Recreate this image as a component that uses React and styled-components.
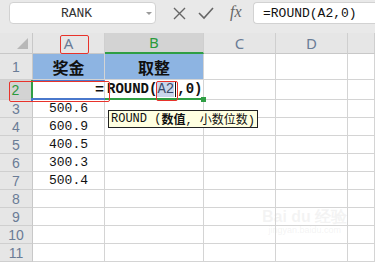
import styled, { createGlobalStyle } from 'styled-components';

const GlobalStyle = createGlobalStyle`
  body {
    margin: 0;
    background: #ffffff;
    font-family: 'Noto Sans', 'Noto Sans CJK SC', sans-serif;
  }
`;

const Page = styled.div`
  position: relative;
  width: 375px;
  height: 264px;
  overflow: hidden;
  background: #ffffff;
`;

const Toolbar = styled.div`
  display: flex;
  align-items: flex-start;
  height: 33px;
  padding-top: 2px;
  box-sizing: border-box;
  background: #e9e9e9;
`;

const NameBox = styled.div`
  position: relative;
  margin-left: 9px;
  width: 147px;
  height: 22px;
  box-sizing: border-box;
  border: 1px solid #d2d2d2;
  border-radius: 4px;
  background: #ffffff;
  display: flex;
  align-items: center;
  justify-content: center;
  padding-right: 12px;
  font-family: 'Liberation Mono', monospace;
  font-size: 13px;
  color: #333333;

  &::after {
    content: '';
    position: absolute;
    right: 3px;
    top: 9px;
    border-left: 3px solid transparent;
    border-right: 3px solid transparent;
    border-top: 3px solid #9a9a9a;
  }
`;

const Icons = styled.div`
  display: flex;
  align-items: center;
  gap: 11px;
  height: 22px;
  margin-left: 16px;
  width: 81px;
  color: #666666;
`;

const Fx = styled.span`
  font-family: 'Liberation Serif', serif;
  font-style: italic;
  font-size: 16px;
  color: #666666;
  margin-left: 5px;
  margin-top: -2px;
`;

const FormulaBox = styled.div`
  flex: 1;
  height: 22px;
  box-sizing: border-box;
  border: 1px solid #d2d2d2;
  border-right: none;
  border-radius: 4px 0 0 4px;
  background: #ffffff;
  display: flex;
  align-items: center;
  padding-left: 9px;
  font-family: 'Liberation Mono', monospace;
  font-size: 13px;
  color: #111111;
`;

const Sheet = styled.div`
  display: grid;
  grid-template-columns: 33px 72px 99px 72px 72px 1fr;
  grid-template-rows: 21px 26px 20px repeat(9, 18px);
  line-height: 1;
`;

const Corner = styled.div`
  background: #e6e6e6;
  border-right: 1px solid #c8c8c8;
  border-bottom: 1px solid #c8c8c8;
  box-sizing: border-box;
  display: flex;
  align-items: flex-end;
  justify-content: flex-end;
  padding: 0 4px 4px 0;

  &::after {
    content: '';
    width: 0;
    height: 0;
    border-left: 11px solid transparent;
    border-bottom: 11px solid #b8b8b8;
  }
`;

const ColHead = styled.div`
  box-sizing: border-box;
  background: ${(p) => (p.$active ? '#d3d3d3' : '#e6e6e6')};
  color: ${(p) => (p.$active ? '#2a9a3c' : '#6a7c96')};
  border-right: 1px solid #cfcfcf;
  border-bottom: ${(p) => (p.$active ? '2px solid #2f9e44' : '1px solid #c8c8c8')};
  display: flex;
  align-items: center;
  justify-content: center;
  font-size: 15px;
`;

const RowHead = styled.div`
  box-sizing: border-box;
  background: ${(p) => (p.$active ? '#d3d3d3' : '#e6e6e6')};
  color: ${(p) => (p.$active ? '#2a9a3c' : '#6a7c96')};
  border-bottom: 1px solid #cfcfcf;
  border-right: ${(p) => (p.$active ? '2px solid #2f9e44' : '1px solid #c8c8c8')};
  display: flex;
  align-items: center;
  justify-content: center;
  font-family: 'Liberation Sans', sans-serif;
  font-size: 14px;
  line-height: 14px;
`;

const Cell = styled.div`
  position: relative;
  box-sizing: border-box;
  border-right: 1px solid #d4d4d4;
  border-bottom: 1px solid #d4d4d4;
  background: ${(p) => (p.$fill ? '#8db4e2' : '#ffffff')};
  display: flex;
  align-items: center;
  justify-content: center;
  font-family: 'Liberation Mono', monospace;
  font-size: 13px;
  color: #111111;
  white-space: nowrap;
`;

const Title = styled.span`
  font-family: 'Noto Sans CJK SC', sans-serif;
  font-weight: 700;
  font-size: 16px;
  color: #111111;
`;

const RefCell = styled(Cell)`
  justify-content: flex-end;
  border-top: 2px solid #4a78cc;
  border-bottom: 2px solid #4a78cc;
  font-weight: 700;
  font-size: 15px;

  &::before,
  &::after {
    content: '';
    position: absolute;
    bottom: -4px;
    width: 4px;
    height: 4px;
    background: #4a78cc;
  }
  &::before {
    left: -2px;
  }
  &::after {
    right: -3px;
  }
`;

const EditCell = styled(Cell)`
  justify-content: flex-start;
  border-bottom: 2px solid #2f9e44;
  font-weight: 700;
  font-size: 14px;
  padding-left: 2px;
  z-index: 1;

  &::after {
    content: '';
    position: absolute;
    right: -3px;
    bottom: -4px;
    width: 5px;
    height: 5px;
    background: #2f9e44;
  }
`;

const RefText = styled.span`
  background: #c9d6ec;
  color: #3a4a6a;
  font-weight: 400;
  padding: 1px 0;
`;

const Caret = styled.span`
  display: inline-block;
  width: 1px;
  height: 15px;
  margin: 0 1px;
  background: #111111;
`;

const Tooltip = styled.div`
  position: absolute;
  left: 108px;
  top: 110px;
  width: 150px;
  height: 18px;
  box-sizing: border-box;
  border: 1px solid #222222;
  background: #ffffe1;
  display: flex;
  align-items: center;
  padding-left: 2px;
  font-family: 'Liberation Mono', 'Noto Sans CJK SC', monospace;
  font-size: 12px;
  color: #111111;
  white-space: nowrap;

  b {
    font-weight: 700;
  }
`;

const Mark = styled.div`
  position: absolute;
  box-sizing: border-box;
  border: 1.5px solid #e8332b;
  border-radius: 2px;
  left: ${(p) => p.$x}px;
  top: ${(p) => p.$y}px;
  width: ${(p) => p.$w}px;
  height: ${(p) => p.$h}px;
  pointer-events: none;
  z-index: 3;
`;

const Watermark = styled.div`
  position: absolute;
  left: 262px;
  top: 210px;
  font-family: 'Liberation Sans', sans-serif;
  font-weight: 700;
  font-size: 16px;
  line-height: 14px;
  color: rgba(210, 210, 210, 0.25);
  text-align: center;

  small {
    display: block;
    font-size: 9px;
    font-weight: 400;
    line-height: 12px;
  }
`;

const CrossIcon = () => (
  <svg width="15" height="15" viewBox="0 0 15 15" fill="none" stroke="#666" strokeWidth="1.4">
    <path d="M2 2 L13 13 M13 2 L2 13" />
  </svg>
);

const CheckIcon = () => (
  <svg width="16" height="14" viewBox="0 0 16 14" fill="none" stroke="#666" strokeWidth="1.6">
    <path d="M1 7 L6 12 L15 2" />
  </svg>
);

const cols = ['A', 'B', 'C', 'D', ''];
const values = ['500.6', '600.9', '400.5', '300.3', '500.4'];

const App = () => {
  const rows = [];
  for (let r = 3; r <= 11; r++) {
    rows.push(
      <RowHead key={`h${r}`}>{r}</RowHead>,
      <Cell key={`a${r}`}>{values[r - 3] || ''}</Cell>,
      <Cell key={`b${r}`} />,
      <Cell key={`c${r}`} />,
      <Cell key={`d${r}`} />,
      <Cell key={`e${r}`} />
    );
  }

  return (
    <Page>
      <GlobalStyle />
      <Toolbar>
        <NameBox>RANK</NameBox>
        <Icons>
          <CrossIcon />
          <CheckIcon />
          <Fx>fx</Fx>
        </Icons>
        <FormulaBox>=ROUND(A2,0)</FormulaBox>
      </Toolbar>

      <Sheet>
        <Corner />
        {cols.map((c) => (
          <ColHead key={c || 'e'} $active={c === 'B'}>
            {c}
          </ColHead>
        ))}

        <RowHead>1</RowHead>
        <Cell $fill>
          <Title>奖金</Title>
        </Cell>
        <Cell $fill>
          <Title>取整</Title>
        </Cell>
        <Cell />
        <Cell />
        <Cell />

        <RowHead $active>2</RowHead>
        <RefCell>=</RefCell>
        <EditCell>
          ROUND(<RefText>A2</RefText>
          <Caret />
          ,0)
        </EditCell>
        <Cell />
        <Cell />
        <Cell />

        {rows}
      </Sheet>

      <Tooltip>
        ROUND (<b>数值</b>, 小数位数)
      </Tooltip>

      <Mark $x={60} $y={35} $w={29} $h={19} />
      <Mark $x={9} $y={81} $w={101} $h={21} />
      <Mark $x={156} $y={81} $w={22} $h={20} />

      <Watermark>
        Bai du 经验
        <small>jingyan.baidu.com</small>
      </Watermark>
    </Page>
  );
};

export default App;
